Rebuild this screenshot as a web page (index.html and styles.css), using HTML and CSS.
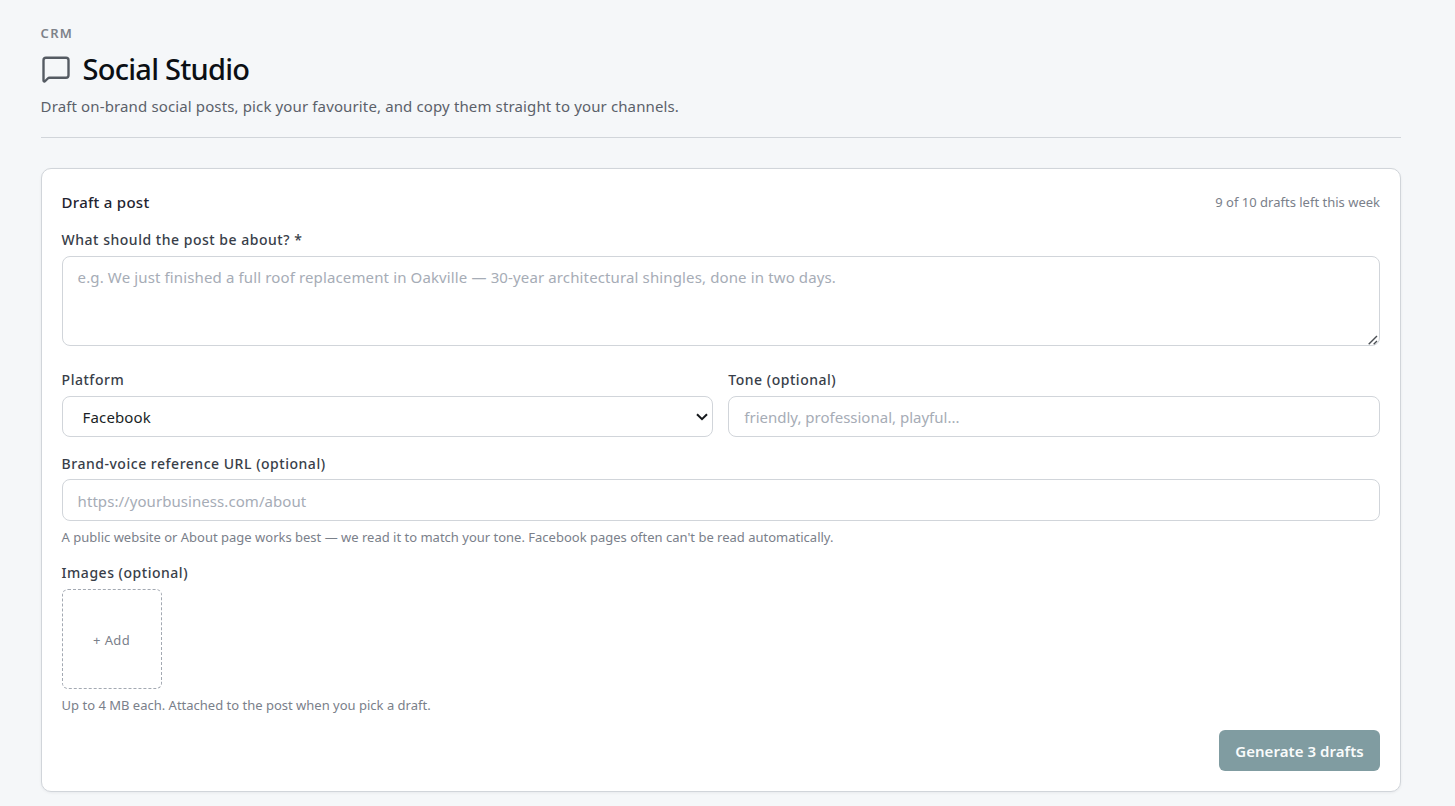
FILE: index.html
```html
<!DOCTYPE html>
<html lang="en">
<head>
    <meta charset="UTF-8">
    <meta name="viewport" content="width=device-width, initial-scale=1.0">
    <title>Social Studio</title>
    <link rel="stylesheet" href="styles.css">
</head>
<body>
    <header class="page-header">
        <p class="eyebrow">CRM</p>
        <h1 class="page-title">
            <svg class="title-icon" viewBox="0 0 24 24" fill="none" stroke="currentColor" stroke-width="1.9" stroke-linecap="round" stroke-linejoin="round">
                <path d="M22 17a2 2 0 0 1-2 2H6.828a2 2 0 0 0-1.414.586l-2.202 2.202A.71.71 0 0 1 2 21.286V5a2 2 0 0 1 2-2h16a2 2 0 0 1 2 2z"/>
            </svg>
            <span>Social Studio</span>
        </h1>
        <p class="subtitle">Draft on-brand social posts, pick your favourite, and copy them straight to your channels.</p>
    </header>

    <form class="card">
        <div class="card-head">
            <h2 class="card-title">Draft a post</h2>
            <span class="quota">9 of 10 drafts left this week</span>
        </div>

        <div class="field field-about">
            <label for="about">What should the post be about? *</label>
            <div class="control">
                <textarea id="about" placeholder="e.g. We just finished a full roof replacement in Oakville — 30-year architectural shingles, done in two days."></textarea>
                <svg class="grip" viewBox="0 0 10 10" fill="none" stroke="#4b4f54" stroke-width="1.4">
                    <path d="M0.7 9.3L9 1M5.7 9.3L9 6"/>
                </svg>
            </div>
        </div>

        <div class="row">
            <div class="field">
                <label for="platform">Platform</label>
                <div class="control">
                    <select id="platform">
                        <option>Facebook</option>
                        <option>Instagram</option>
                        <option>LinkedIn</option>
                    </select>
                    <svg class="chevron" viewBox="0 0 12 8" fill="none" stroke="#15181c" stroke-width="2">
                        <path d="M1 1.2L6 6.2L11 1.2"/>
                    </svg>
                </div>
            </div>
            <div class="field">
                <label for="tone">Tone (optional)</label>
                <input type="text" id="tone" placeholder="friendly, professional, playful...">
            </div>
        </div>

        <div class="field field-url">
            <label for="url">Brand-voice reference URL (optional)</label>
            <input type="url" id="url" placeholder="https://yourbusiness.com/about">
            <p class="hint">A public website or About page works best — we read it to match your tone. Facebook pages often can't be read automatically.</p>
        </div>

        <div class="field field-images">
            <label>Images (optional)</label>
            <button type="button" class="add-image">+ Add</button>
            <p class="hint">Up to 4 MB each. Attached to the post when you pick a draft.</p>
        </div>

        <div class="actions">
            <button type="button" class="generate">Generate 3 drafts</button>
        </div>
    </form>
</body>
</html>
```
FILE: styles.css
```css
* {
    box-sizing: border-box;
}
body {
    margin: 0;
    padding: 23px 54px 0 40.6px;
    height: 806px;
    overflow: hidden;
    background-color: #f5f7f9;
    color: #0f1419;
    font-family: "Noto Sans", "Open Sans", sans-serif;
    font-size: 15px;
}
h1, h2, p {
    margin: 0;
}
.page-header {
    height: 115px;
    border-bottom: 1px solid #d1d5da;
    margin-bottom: 30px;
}
.eyebrow {
    font-size: 13px;
    font-weight: 600;
    line-height: 20px;
    letter-spacing: 1.3px;
    color: #7d828a;
}
.page-title {
    display: flex;
    align-items: center;
    gap: 12px;
    height: 40px;
    margin-top: 6px;
    font-size: 29px;
    font-weight: 500;
    line-height: 40px;
    letter-spacing: -0.75px;
    color: #0b0f14;
}
.title-icon {
    width: 30px;
    height: 30px;
    color: #555b63;
}
.subtitle {
    margin-top: 5px;
    line-height: 24px;
    letter-spacing: 0.13px;
    color: #5b616a;
}
.card {
    height: 624px;
    padding: 20px;
    background-color: #fff;
    border: 1px solid #d1d5da;
    border-radius: 10px;
    box-shadow: 0 1px 3px rgba(15, 20, 30, 0.06);
}
.card-head {
    display: flex;
    justify-content: space-between;
    align-items: center;
    height: 26px;
}
.card-title {
    font-size: 15px;
    font-weight: 500;
    letter-spacing: 0.27px;
    color: #1f2430;
}
.quota, .hint {
    font-size: 13px;
    line-height: 20px;
    color: #7a808a;
}
.hint {
    margin-top: 6px;
}
.field {
    display: flex;
    flex-direction: column;
}
.field label {
    height: 20px;
    margin-bottom: 6px;
    font-size: 14px;
    font-weight: 500;
    line-height: 20px;
    letter-spacing: 0.52px;
    color: #383e49;
}
.field-about {
    margin-top: 15px;
}
.control {
    display: flex;
    position: relative;
}
input, select, textarea {
    width: 100%;
    height: 41px;
    padding: 0 15px;
    background-color: #fff;
    border: 1px solid #d1d5da;
    border-radius: 8px;
    font-family: inherit;
    font-size: 15px;
    letter-spacing: 0.13px;
    color: #1a1f26;
}
textarea {
    height: 90px;
    padding: 8px 15px;
    line-height: 24px;
    resize: none;
}
.grip {
    position: absolute;
    right: 2px;
    bottom: 1px;
    width: 10px;
    height: 10px;
}
select {
    padding: 0 20px;
    appearance: none;
}
.chevron {
    position: absolute;
    right: 5px;
    top: 17px;
    width: 12px;
    height: 8px;
    pointer-events: none;
}
::placeholder {
    color: #a6acb6;
}
.row {
    display: grid;
    grid-template-columns: 1fr 1fr;
    gap: 15px;
    margin-top: 24px;
}
#tone {
    letter-spacing: 0;
}
.field-url {
    margin-top: 17px;
}
.field-url label {
    margin-bottom: 5px;
}
.field-url input {
    height: 42px;
    padding-top: 2px;
    letter-spacing: 0.06px;
}
.field-images {
    margin-top: 16px;
}
.add-image {
    width: 100px;
    height: 100px;
    padding: 2px 0 0;
    background-color: #fff;
    border: 1px dashed #a3a9b2;
    border-radius: 6px;
    font-family: inherit;
    font-size: 13px;
    letter-spacing: 0.4px;
    color: #7a808a;
}
.actions {
    display: flex;
    justify-content: flex-end;
    margin-top: 15px;
}
.generate {
    width: 161px;
    height: 41px;
    padding: 0;
    background-color: #809ca1;
    border: none;
    border-radius: 6px;
    font-family: inherit;
    font-size: 15px;
    font-weight: 600;
    letter-spacing: 0.05px;
    color: #f8fbfb;
}
```
